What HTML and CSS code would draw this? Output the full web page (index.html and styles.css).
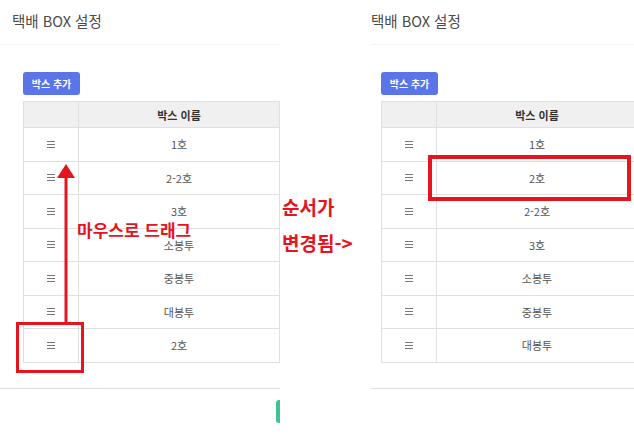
FILE: index.html
```html
<!DOCTYPE html>
<html lang="ko">
<head>
  <meta charset="UTF-8">
  <title>택배 BOX 설정</title>
  <link rel="stylesheet" href="styles.css">
</head>
<body>
  <div class="stage">

    <div class="panel panel-before">
      <div class="panel-head">택배 BOX 설정</div>
      <div class="panel-body">
        <button class="add-button">박스 추가</button>
        <table class="box-table">
          <thead>
            <tr><th class="handle-col"></th><th class="name-col">박스 이름</th><th class="extra-col"></th></tr>
          </thead>
          <tbody>
            <tr><td class="handle"><svg viewBox="0 0 8 7" width="8" height="7"><path d="M0 .5h8M0 3.5h8M0 6.5h8"/></svg></td><td>1호</td><td></td></tr>
            <tr><td class="handle"><svg viewBox="0 0 8 7" width="8" height="7"><path d="M0 .5h8M0 3.5h8M0 6.5h8"/></svg></td><td>2-2호</td><td></td></tr>
            <tr><td class="handle"><svg viewBox="0 0 8 7" width="8" height="7"><path d="M0 .5h8M0 3.5h8M0 6.5h8"/></svg></td><td>3호</td><td></td></tr>
            <tr><td class="handle"><svg viewBox="0 0 8 7" width="8" height="7"><path d="M0 .5h8M0 3.5h8M0 6.5h8"/></svg></td><td>소봉투</td><td></td></tr>
            <tr><td class="handle"><svg viewBox="0 0 8 7" width="8" height="7"><path d="M0 .5h8M0 3.5h8M0 6.5h8"/></svg></td><td>중봉투</td><td></td></tr>
            <tr><td class="handle"><svg viewBox="0 0 8 7" width="8" height="7"><path d="M0 .5h8M0 3.5h8M0 6.5h8"/></svg></td><td>대봉투</td><td></td></tr>
            <tr><td class="handle"><svg viewBox="0 0 8 7" width="8" height="7"><path d="M0 .5h8M0 3.5h8M0 6.5h8"/></svg></td><td>2호</td><td></td></tr>
          </tbody>
        </table>
      </div>
      <div class="panel-foot">
        <span class="save-button"></span>
      </div>
    </div>

    <div class="note">
      <p>순서가</p>
      <p>변경됨-&gt;</p>
    </div>

    <div class="panel panel-after">
      <div class="panel-head">택배 BOX 설정</div>
      <div class="panel-body">
        <button class="add-button">박스 추가</button>
        <table class="box-table">
          <thead>
            <tr><th class="handle-col"></th><th class="name-col">박스 이름</th><th class="extra-col"></th></tr>
          </thead>
          <tbody>
            <tr><td class="handle"><svg viewBox="0 0 8 7" width="8" height="7"><path d="M0 .5h8M0 3.5h8M0 6.5h8"/></svg></td><td>1호</td><td></td></tr>
            <tr><td class="handle"><svg viewBox="0 0 8 7" width="8" height="7"><path d="M0 .5h8M0 3.5h8M0 6.5h8"/></svg></td><td>2호</td><td></td></tr>
            <tr><td class="handle"><svg viewBox="0 0 8 7" width="8" height="7"><path d="M0 .5h8M0 3.5h8M0 6.5h8"/></svg></td><td>2-2호</td><td></td></tr>
            <tr><td class="handle"><svg viewBox="0 0 8 7" width="8" height="7"><path d="M0 .5h8M0 3.5h8M0 6.5h8"/></svg></td><td>3호</td><td></td></tr>
            <tr><td class="handle"><svg viewBox="0 0 8 7" width="8" height="7"><path d="M0 .5h8M0 3.5h8M0 6.5h8"/></svg></td><td>소봉투</td><td></td></tr>
            <tr><td class="handle"><svg viewBox="0 0 8 7" width="8" height="7"><path d="M0 .5h8M0 3.5h8M0 6.5h8"/></svg></td><td>중봉투</td><td></td></tr>
            <tr><td class="handle"><svg viewBox="0 0 8 7" width="8" height="7"><path d="M0 .5h8M0 3.5h8M0 6.5h8"/></svg></td><td>대봉투</td><td></td></tr>
          </tbody>
        </table>
      </div>
      <div class="panel-foot"></div>
    </div>

    <!-- annotations drawn over the screenshots -->
    <svg class="drag-arrow" viewBox="0 0 20 160" width="20" height="160">
      <path d="M10 12V160" />
      <polygon points="1,14 19,14 10,0" />
    </svg>
    <div class="drag-label">마우스로 드래그</div>
    <div class="mark mark-dragged"></div>
    <div class="mark mark-moved"></div>
  </div>
</body>
</html>
```

FILE: styles.css
```css
body {
  margin: 0;
  background: #fff;
  font-family: 'Noto Sans CJK KR', 'Noto Sans', sans-serif;
  color: #555;
}

.stage {
  position: relative;
  display: flex;
  width: 634px;
  height: 434px;
  overflow: hidden;
}

.panel {
  flex: none;
  overflow: hidden;
}

.panel-before {
  width: 280px;
}

.panel-after {
  width: 264px;
}

.panel-head {
  height: 44px;
  line-height: 42px;
  font-size: 14.5px;
  color: #4a4a4a;
  border-bottom: 1px solid #f2f2f2;
  white-space: nowrap;
}

.panel-before .panel-head {
  padding-left: 12px;
}

.panel-after .panel-head {
  margin-left: 1px;
}

.panel-body {
  padding-top: 27px;
  height: 316px;
}

.panel-before .panel-body {
  padding-left: 23px;
}

.panel-after .panel-body {
  padding-left: 11px;
}

.add-button {
  display: block;
  width: 57px;
  height: 23px;
  padding: 0;
  border: none;
  border-radius: 3px;
  background: #5b74e8;
  color: #fff;
  font-family: inherit;
  font-size: 10px;
  font-weight: 700;
  margin-bottom: 6px;
}

.box-table {
  border-collapse: collapse;
  table-layout: fixed;
  width: 320px;
  font-size: 11px;
  color: #555;
}

.box-table th,
.box-table td {
  border: 1px solid #e0e0e0;
  text-align: center;
  padding: 0;
  line-height: 14px;
}

.box-table th {
  height: 25px;
  background: #f0f0f0;
  color: #333;
  font-weight: 700;
}

.box-table td {
  height: 32.5px;
}

.handle-col {
  width: 54px;
}

.name-col {
  width: 200px;
}

.handle svg {
  display: block;
  margin: 0 auto;
  stroke: #777;
  stroke-width: 1;
}

.panel-foot {
  border-top: 1px solid #dcdcdc;
  height: 45px;
  position: relative;
}

.panel-after .panel-foot {
  margin-left: 1px;
}

.save-button {
  position: absolute;
  left: 276px;
  top: 11px;
  width: 14px;
  height: 23px;
  border-radius: 3px;
  background: #3cc38f;
}

.note {
  flex: none;
  width: 88px;
  padding: 189px 0 0 2px;
  color: #e5141e;
  font-size: 19px;
  font-weight: 700;
  line-height: 36px;
  white-space: nowrap;
}

.note p {
  margin: 0;
}

.drag-arrow {
  position: absolute;
  left: 56px;
  top: 164px;
  fill: #e5141e;
  stroke: #e5141e;
  stroke-width: 3;
}

.drag-arrow polygon {
  stroke: none;
}

.drag-label {
  position: absolute;
  left: 77px;
  top: 221px;
  color: #e5141e;
  font-size: 17px;
  font-weight: 700;
  line-height: 18px;
  white-space: nowrap;
}

.mark {
  position: absolute;
  border: 3px solid #e5141e;
  box-sizing: border-box;
}

.mark-dragged {
  left: 16px;
  top: 322px;
  width: 68px;
  height: 51px;
}

.mark-moved {
  left: 428px;
  top: 155px;
  width: 203px;
  height: 46px;
  border-width: 4px;
}
```
